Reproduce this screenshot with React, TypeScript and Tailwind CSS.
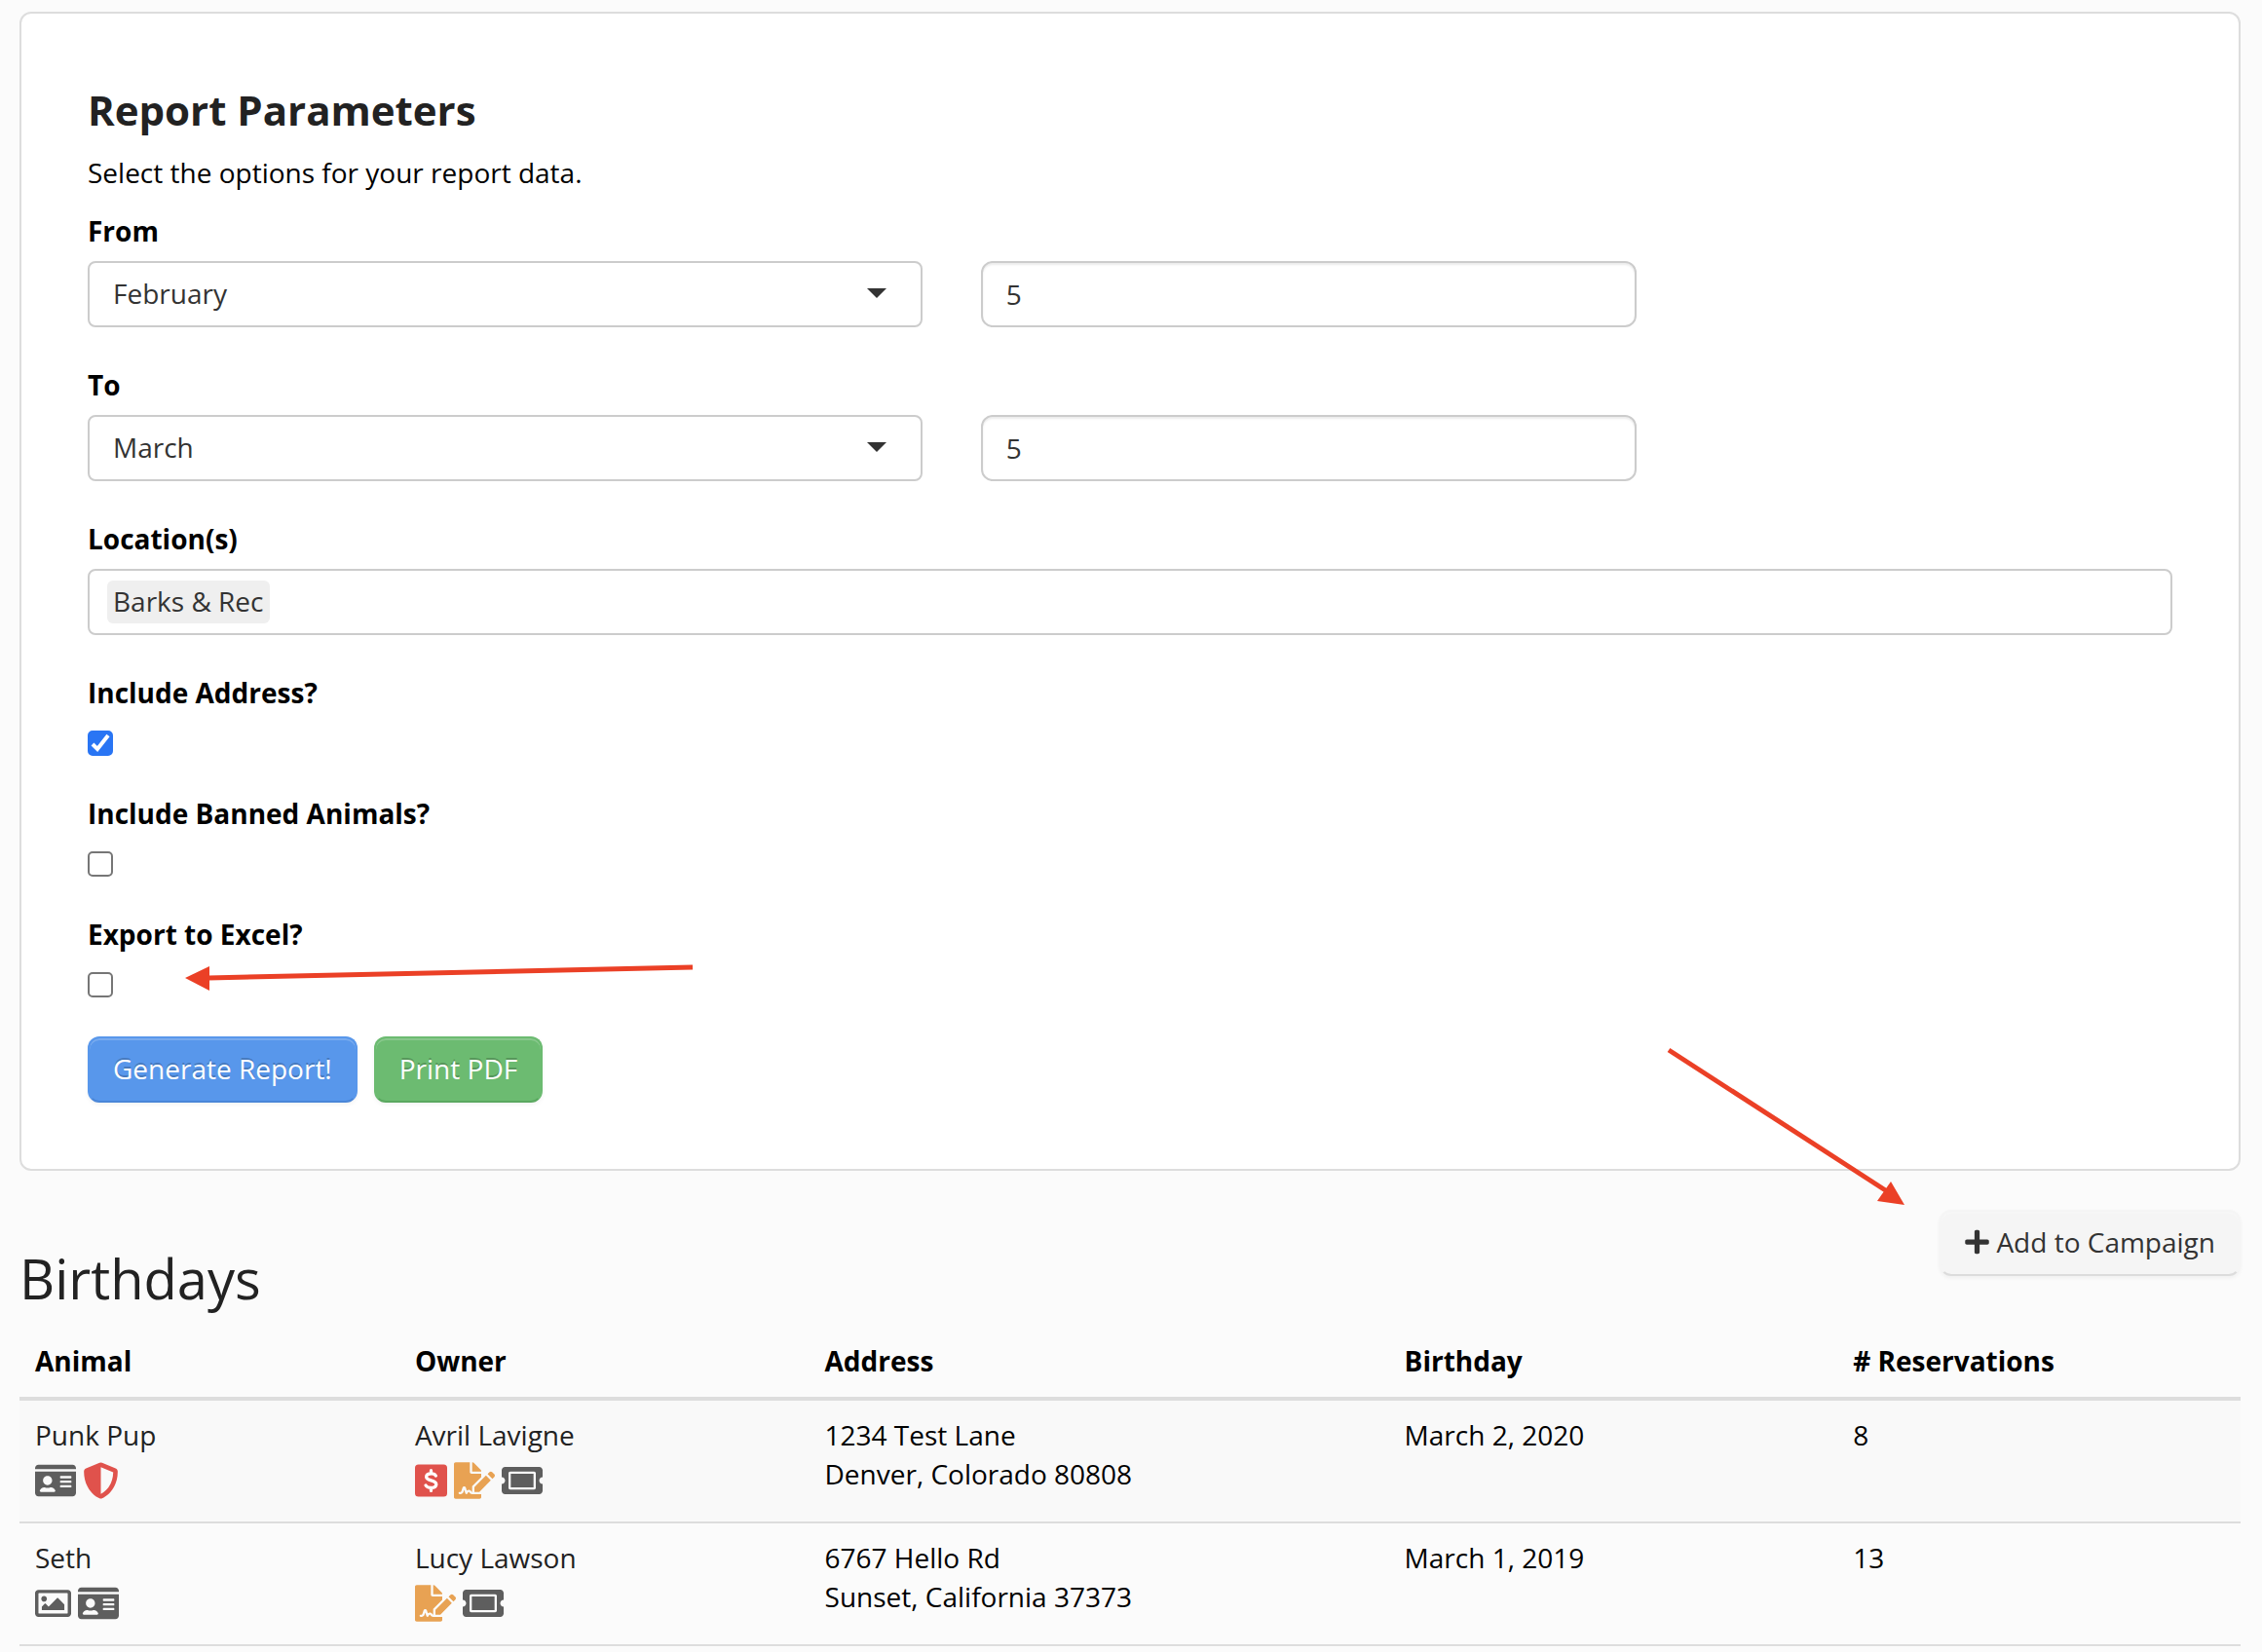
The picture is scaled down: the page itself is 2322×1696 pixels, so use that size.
import { useState } from "react";
import type { ReactNode } from "react";
import {
  FaFileSignature,
  FaIdCard,
  FaPlus,
  FaRegImage,
  FaShieldAlt,
  FaTicketAlt,
} from "react-icons/fa";

const MONTHS = [
  "January", "February", "March", "April", "May", "June",
  "July", "August", "September", "October", "November", "December",
];

function DollarSquare() {
  return (
    <svg viewBox="0 0 448 512" className="h-[38px] w-[33px]" fill="none" role="img" aria-label="Balance due">
      <rect x="0" y="32" width="448" height="448" rx="48" fill="#e0524c" />
      <path
        d="M290 190c-10-22-32-32-64-32-42 0-68 18-68 46 0 30 30 40 66 50 42 12 72 22 72 54 0 30-30 48-72 48-38 0-62-10-74-34M224 116v42M224 356v42"
        stroke="#fff"
        strokeWidth="44"
        strokeLinecap="round"
        strokeLinejoin="round"
      />
    </svg>
  );
}

const ICONS: Record<string, ReactNode> = {
  card: <FaIdCard className="h-[38px] w-[42px] text-[#5e5e5e]" aria-label="ID card" />,
  shield: <FaShieldAlt className="h-[38px] w-[37px] text-[#e0524c]" aria-label="Immunizations" />,
  image: <FaRegImage className="h-[38px] w-[37px] text-[#5e5e5e]" aria-label="Photo" />,
  dollar: <DollarSquare />,
  contract: <FaFileSignature className="h-[38px] w-[42px] text-[#e8a253]" aria-label="Contract" />,
  ticket: <FaTicketAlt className="h-[38px] w-[42px] text-[#5e5e5e]" aria-label="Packages" />,
};

const ROWS = [
  {
    animal: "Punk Pup",
    animalIcons: ["card", "shield"],
    owner: "Avril Lavigne",
    ownerIcons: ["dollar", "contract", "ticket"],
    address: ["1234 Test Lane", "Denver, Colorado 80808"],
    birthday: "March 2, 2020",
    reservations: 8,
  },
  {
    animal: "Seth",
    animalIcons: ["image", "card"],
    owner: "Lucy Lawson",
    ownerIcons: ["contract", "ticket"],
    address: ["6767 Hello Rd", "Sunset, California 37373"],
    birthday: "March 1, 2019",
    reservations: 13,
  },
];

function DateRow({ id, label, month, day }: { id: string; label: string; month: string; day: string }) {
  return (
    <div className="mb-[39px]">
      <label htmlFor={id} className="mb-[11px] block font-bold">{label}</label>
      <div className="grid grid-cols-12 gap-x-[60px]">
        <div className="relative col-span-5">
          <select
            id={id}
            defaultValue={month}
            className="block h-[68px] w-full appearance-none rounded-lg border-2 border-[#ccc] bg-white px-6 pb-0.5 text-[#333]"
          >
            {MONTHS.map((m) => (
              <option key={m}>{m}</option>
            ))}
          </select>
          <svg viewBox="0 0 20 10" className="pointer-events-none absolute top-7 right-[37px] h-2.5 w-5" aria-hidden="true">
            <path d="M0 0h20L10 10z" fill="#333" />
          </svg>
        </div>
        <input
          type="text"
          aria-label={`${label} day`}
          defaultValue={day}
          className="col-span-4 h-[68px] w-full rounded-xl border-2 border-[#ccc] bg-white px-6 text-[#333] shadow-[inset_0_2px_2px_rgba(0,0,0,0.075)]"
        />
      </div>
    </div>
  );
}

function CheckField({ id, label, checked, children }: { id: string; label: string; checked?: boolean; children?: ReactNode }) {
  const [on, setOn] = useState(!!checked);
  return (
    <div className="relative mb-[39px]">
      <label htmlFor={id} className="mb-[19px] block font-bold">{label}</label>
      <div className="relative size-[26px]">
        <input
          id={id}
          type="checkbox"
          checked={on}
          onChange={(e) => setOn(e.target.checked)}
          className="block size-[26px] appearance-none rounded-[5px] border-2 border-[#767676] bg-white checked:border-[#2975f4] checked:bg-[#2975f4]"
        />
        {on && (
          <svg viewBox="0 0 26 26" className="pointer-events-none absolute inset-0 size-[26px]" fill="none" aria-hidden="true">
            <path d="M5 14l5 5L21 5" stroke="#fff" strokeWidth="4" />
          </svg>
        )}
      </div>
      {children}
    </div>
  );
}

function NameCell({ name, icons }: { name: string; icons: string[] }) {
  return (
    <td className="px-4 py-[15px] align-top">
      <a href="#" className="text-[#222]">{name}</a>
      <div className="flex h-[54px] items-center gap-[7px]">
        {icons.map((icon) => (
          <span key={icon}>{ICONS[icon]}</span>
        ))}
      </div>
    </td>
  );
}

export default function App() {
  return (
    <div className="min-h-screen bg-[#fbfbfb] pt-3 pr-[22px] pl-5 font-['Open_Sans',sans-serif] text-[28px] leading-10 text-black">
      <form
        onSubmit={(e) => e.preventDefault()}
        className="rounded-xl border-2 border-[#ddd] bg-white px-[68px] pt-[76px] pb-[68px]"
      >
        <h2 className="mb-[21px] text-[42px] leading-[46px] font-bold text-[#222]">Report Parameters</h2>
        <p className="mb-5">Select the options for your report data.</p>

        <DateRow id="from" label="From" month="February" day="5" />
        <DateRow id="to" label="To" month="March" day="5" />

        <div className="mb-[39px]">
          <label htmlFor="locations" className="mb-[11px] block font-bold">Location(s)</label>
          <div className="flex h-[68px] items-center rounded-lg border-2 border-[#ccc] bg-white px-[18px]">
            <span className="rounded-md bg-[#efefef] px-1.5 pt-px pb-[3px] text-[#333]">Barks &amp; Rec</span>
            <input id="locations" type="text" className="ml-2 min-w-0 flex-1 outline-none" />
          </div>
        </div>

        <CheckField id="address" label="Include Address?" checked />
        <CheckField id="banned" label="Include Banned Animals?" />
        <CheckField id="excel" label="Export to Excel?">
          <svg viewBox="0 0 522 30" className="pointer-events-none absolute top-[50px] left-[100px] h-[30px] w-[522px]" aria-hidden="true">
            <path d="M24 15L521 4" stroke="#eb4026" strokeWidth="5" />
            <path d="M0 15L25 3v25z" fill="#eb4026" />
          </svg>
        </CheckField>

        <div className="flex gap-[17px] pt-px">
          <button
            type="submit"
            className="h-[68px] rounded-xl border-2 border-[#5897eb] border-b-[#4a86d8] bg-[#5897eb] px-6 pb-0.5 text-white shadow-[inset_0_2px_0_rgba(255,255,255,0.2),0_2px_4px_rgba(0,0,0,0.05)] [text-shadow:0_-2px_0_rgba(0,0,0,0.2)]"
          >
            Generate Report!
          </button>
          <button
            type="button"
            className="h-[68px] rounded-xl border-2 border-[#6cbb71] border-b-[#5aa860] bg-[#6cbb71] px-6 pb-0.5 text-white shadow-[inset_0_2px_0_rgba(255,255,255,0.2),0_2px_4px_rgba(0,0,0,0.05)] [text-shadow:0_-2px_0_rgba(0,0,0,0.2)]"
          >
            Print PDF
          </button>
        </div>
      </form>

      <div className="relative mt-10 mb-5 flex items-start justify-between">
        <h1 className="mt-10 text-[56px] leading-[60px] text-[#222]">Birthdays</h1>
        <button
          type="button"
          className="flex h-[68px] items-center gap-[7px] rounded-xl border-2 border-[#f5f5f5] border-b-[#dcdcdc] bg-[#f5f5f5] px-6 pb-0.5 text-[#333] shadow-[inset_0_2px_0_rgba(255,255,255,0.2),0_2px_4px_rgba(0,0,0,0.05)]"
        >
          <FaPlus className="h-7 w-[25px]" aria-hidden="true" />
          Add to Campaign
        </button>
        <svg viewBox="0 0 246 164" className="pointer-events-none absolute -top-[168px] right-[343px] h-[164px] w-[246px]" aria-hidden="true">
          <path d="M2 4L226 149" stroke="#eb4026" strokeWidth="5" />
          <path d="M244 163L230 139L216 159z" fill="#eb4026" />
        </svg>
      </div>

      <table className="w-full table-fixed border-collapse text-left">
        <thead>
          <tr className="border-b-4 border-[#ddd]">
            <th className="w-[17.1%] px-4 pt-[15px] pb-[17px] font-bold">Animal</th>
            <th className="w-[18.45%] px-4 pt-[15px] pb-[17px] font-bold">Owner</th>
            <th className="w-[26.1%] px-4 pt-[15px] pb-[17px] font-bold">Address</th>
            <th className="w-[20.2%] px-4 pt-[15px] pb-[17px] font-bold">Birthday</th>
            <th className="px-4 pt-[15px] pb-[17px] font-bold"># Reservations</th>
          </tr>
        </thead>
        <tbody>
          {ROWS.map((row) => (
            <tr key={row.animal} className="border-b-2 border-[#ddd] odd:bg-[#f9f9f9]">
              <NameCell name={row.animal} icons={row.animalIcons} />
              <NameCell name={row.owner} icons={row.ownerIcons} />
              <td className="px-4 py-[15px] align-top">
                {row.address[0]}
                <br />
                {row.address[1]}
              </td>
              <td className="px-4 py-[15px] align-top">{row.birthday}</td>
              <td className="px-4 py-[15px] align-top">{row.reservations}</td>
            </tr>
          ))}
        </tbody>
      </table>
    </div>
  );
}
